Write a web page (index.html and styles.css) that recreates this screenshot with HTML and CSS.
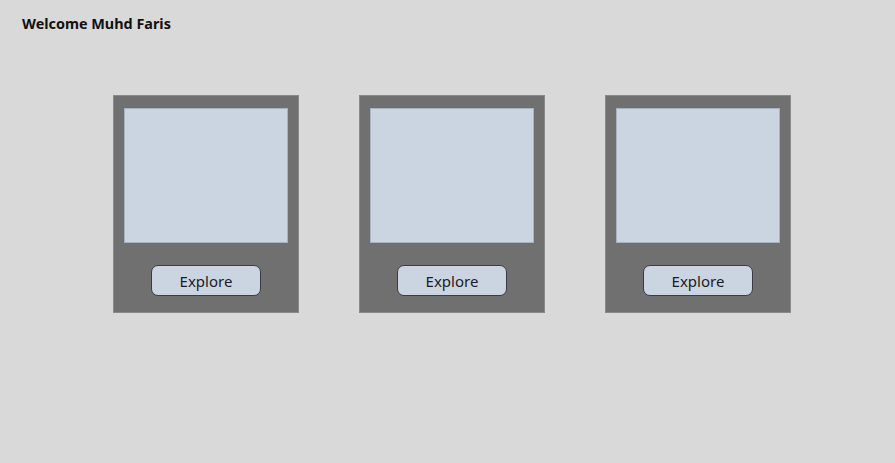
FILE: index.html
```html
<!DOCTYPE html>
<html>
<head>
<meta charset="utf-8">
<link rel="stylesheet" href="styles.css">
</head>
<body>
<header class="top">Welcome Muhd Faris</header>
<main class="cards">
  <div class="card"><div class="thumb"></div><button class="btn">Explore</button></div>
  <div class="card"><div class="thumb"></div><button class="btn">Explore</button></div>
  <div class="card"><div class="thumb"></div><button class="btn">Explore</button></div>
</main>
</body>
</html>
```
FILE: styles.css
```css
html, body {
  margin: 0;
  background: #d9d9d9;
  height: 100%;
}
body {
  font-family: "Noto Sans", "Open Sans", sans-serif;
}
.top {
  padding: 14px 22px 0;
  font-size: 14.4px;
  font-weight: 700;
  color: #111;
  height: 22px;
  line-height: 20px;
}
.cards {
  display: flex;
  gap: 60px;
  padding: 59px 0 0 113px;
}
.card {
  box-sizing: border-box;
  width: 186px;
  height: 218px;
  background: #707070;
  border: 1px solid #8a8a8a;
  padding: 12px 11px 0;
  display: flex;
  flex-direction: column;
  align-items: center;
}
.thumb {
  box-sizing: border-box;
  width: 164px;
  height: 135px;
  background: #cbd5e1;
  border: 1px solid #a9b2bf;
}
.btn {
  box-sizing: border-box;
  margin-top: 22px;
  width: 110px;
  height: 31px;
  background: #cbd5e1;
  border: 1px solid #3c3c44;
  border-radius: 7px;
  font-family: "Noto Sans", "Open Sans", sans-serif;
  font-size: 15px;
  color: #1a1a2a;
  padding: 0;
}
```
